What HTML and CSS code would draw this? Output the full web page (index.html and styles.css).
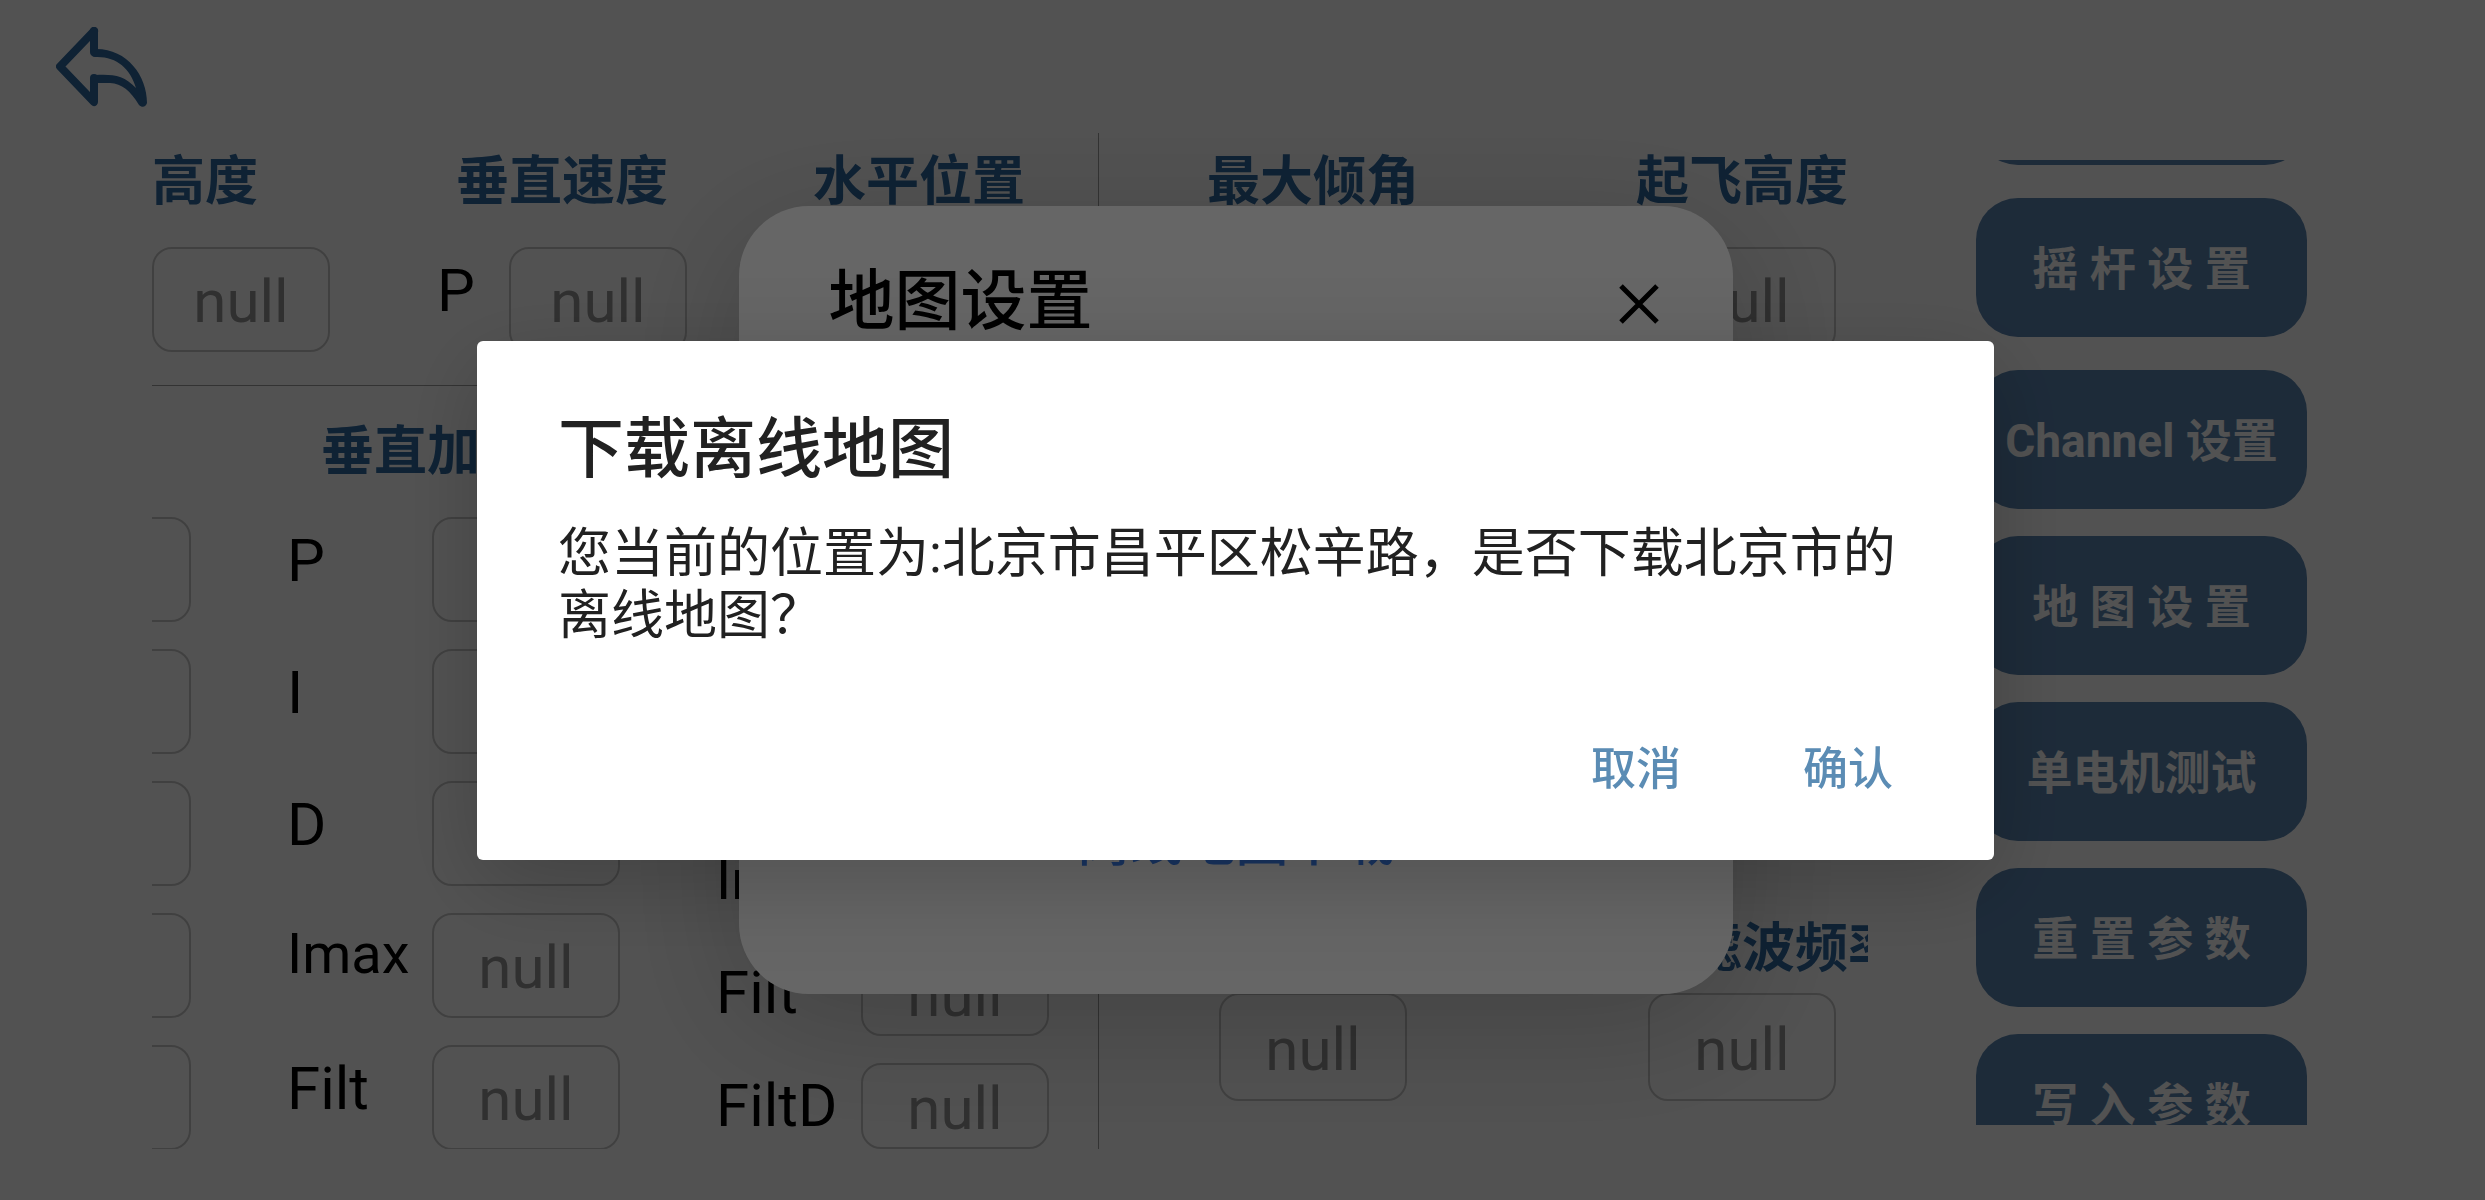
FILE: index.html
```html
<!DOCTYPE html>
<html lang="zh-CN">
<head>
<meta charset="utf-8">
<title>参数设置</title>
<link rel="stylesheet" href="styles.css">
</head>
<body>
<div class="page">
  <header class="topbar">
    <button class="back" type="button" aria-label="返回">
      <svg viewBox="0 0 92 80" width="92" height="80" fill="none" stroke="currentColor" stroke-linejoin="round" stroke-linecap="round">
        <path stroke-width="8" d="M38 4 L4 39.500 L38 75 V51"/>
        <path stroke-width="8" d="M38 4 V25"/>
        <path fill="currentColor" stroke="none" d="M37 22 C70 20 91 48 91 76 C90 80 86 81 83 78 C74 63 66 57 54 56 H37 C34 56 34 48 39 48 C56 47 68 48 80 61 C74 41 60 29 39 30 C34 30 34 23 37 22 Z"/>
      </svg>
    </button>
  </header>
  <main class="content">
    <div class="params">
      <div class="loops">
        <div class="outer">
          <section class="group start">
            <h2>高度</h2>
            <input class="narrow" value="null" aria-label="高度">
          </section>
          <section class="group">
            <h2>垂直速度</h2>
            <div class="field tight"><label for="vs-p">P</label><input class="narrow" id="vs-p" value="null"></div>
          </section>
          <section class="group">
            <h2>水平位置</h2>
            <div class="field tight"><label for="hp-p">P</label><input class="narrow" id="hp-p" value="null"></div>
          </section>
        </div>
        <div class="inner">
          <div class="scrolled">
            <input value="null" aria-label="P">
            <input value="null" aria-label="I">
            <input value="null" aria-label="D">
            <input value="null" aria-label="Imax">
            <input value="null" aria-label="Filt">
          </div>
          <section class="vertical">
            <h2>垂直加速度</h2>
            <div class="field"><label for="va-p">P</label><input id="va-p" value="null"></div>
            <div class="field"><label for="va-i">I</label><input id="va-i" value="null"></div>
            <div class="field"><label for="va-d">D</label><input id="va-d" value="null"></div>
            <div class="field"><label class="small" for="va-imax">Imax</label><input id="va-imax" value="null"></div>
            <div class="field"><label for="va-filt">Filt</label><input id="va-filt" value="null"></div>
          </section>
          <section class="horizontal">
            <h2>水平速度</h2>
            <div class="field"><label for="hv-p">P</label><input id="hv-p" value="null"></div>
            <div class="field"><label for="hv-i">I</label><input id="hv-i" value="null"></div>
            <div class="field"><label for="hv-d">D</label><input id="hv-d" value="null"></div>
            <div class="field"><label class="small" for="hv-imax">Imax</label><input id="hv-imax" value="null"></div>
            <div class="field"><label for="hv-filt">Filt</label><input id="hv-filt" value="null"></div>
            <div class="field"><label for="hv-filtd">FiltD</label><input id="hv-filtd" value="null"></div>
          </section>
        </div>
      </div>
      <div class="limits">
        <div class="pair">
          <section class="group"><h2>最大倾角</h2><input value="null" aria-label="最大倾角"></section>
          <section class="group"><h2>起飞高度</h2><input value="null" aria-label="起飞高度"></section>
        </div>
        <div class="pair filters">
          <section class="group"><h2>加计滤波频率</h2><input value="null" aria-label="加计滤波频率"></section>
          <section class="group"><h2>陀螺滤波频率</h2><input value="null" aria-label="陀螺滤波频率"></section>
        </div>
      </div>
    </div>
    <nav class="menu">
      <button class="spaced" type="button">基 础 设 置</button>
      <button class="spaced" type="button">摇 杆 设 置</button>
      <button type="button">Channel 设置</button>
      <button type="button">地 图 设 置</button>
      <button type="button">单电机测试</button>
      <button type="button">重 置 参 数</button>
      <button type="button">写 入 参 数</button>
    </nav>
  </main>
</div>

<div class="overlay light">
  <section class="card">
    <header>
      <h2>地图设置</h2>
      <button class="close" type="button" aria-label="关闭">
        <svg viewBox="0 0 40 40" width="40" height="40" stroke="currentColor" stroke-width="5"><path d="M2 2 L38 38 M38 2 L2 38"/></svg>
      </button>
    </header>
    <a href="#download">离线地图下载</a>
  </section>
</div>

<div class="overlay dark">
  <section class="dialog" role="dialog" aria-labelledby="dialog-title">
    <h2 id="dialog-title">下载离线地图</h2>
    <p>您当前的位置为:北京市昌平区松辛路，是否下载北京市的离线地图？</p>
    <footer>
      <button type="button">取消</button>
      <button type="button">确认</button>
    </footer>
  </section>
</div>
</body>
</html>
```
FILE: styles.css
```css
* {
  box-sizing: border-box;
}

body {
  margin: 0;
  background: #fff;
  color: #000;
  font-family: Roboto, "Noto Sans CJK SC", sans-serif;
  overflow: hidden;
}

h2,
p {
  margin: 0;
}

button {
  border: 0;
  background: none;
  padding: 0;
  font-family: inherit;
}

svg {
  display: block;
}

.page {
  height: 100vh;
  display: flex;
  flex-direction: column;
}

.topbar {
  flex: none;
  height: 133px;
  padding: 27px 56px;
}

.back {
  color: #2f6aa2;
}

.content {
  flex: 1;
  min-height: 0;
  display: flex;
  gap: 108px;
  padding: 0 178px 51px 152px;
}

.params {
  flex: 1;
  min-width: 0;
  display: flex;
  overflow: hidden;
}

.params h2 {
  color: #2f6aa2;
  font-size: 53px;
  line-height: 64px;
  font-weight: 700;
  white-space: nowrap;
}

.params input {
  width: 188px;
  height: 105px;
  flex: none;
  padding: 4px 0 0;
  border: 2px solid #c8c8c8;
  border-radius: 20px;
  background: none;
  color: #969696;
  font-family: inherit;
  font-size: 60px;
  text-align: center;
}

.params input.narrow {
  width: 178px;
}

.loops {
  width: 947px;
  flex: none;
  border-right: 1px solid #9f9f9f;
}

.outer {
  display: flex;
  gap: 107px;
  padding: 17px 0 33px;
  border-bottom: 1px solid #9f9f9f;
}

.group {
  display: flex;
  flex-direction: column;
  align-items: center;
  gap: 33px;
}

.group.start {
  align-items: flex-start;
}

.field {
  display: grid;
  grid-template-columns: 145px 188px;
  align-items: center;
}

.field.tight {
  grid-template-columns: 72px 178px;
}

.field label {
  padding-bottom: 18px;
  font-size: 60px;
  line-height: 70px;
}

.field label.small {
  padding-bottom: 24px;
  font-size: 56px;
}

.inner {
  display: flex;
  padding-top: 34px;
}

.scrolled {
  width: 39px;
  flex: none;
  display: flex;
  flex-direction: column;
  align-items: flex-end;
  gap: 27px;
  padding-top: 97px;
  overflow: hidden;
}

.vertical {
  display: flex;
  flex-direction: column;
  gap: 27px;
  margin-left: 96px;
}

.vertical h2 {
  margin-bottom: 6px;
  text-align: center;
}

.horizontal {
  display: flex;
  flex-direction: column;
  gap: 27px;
  margin-left: 96px;
}

.horizontal h2 {
  margin-bottom: -13px;
  text-align: center;
}

.horizontal .field label {
  padding-bottom: 0;
}

.horizontal input {
  height: 86px;
}

.limits {
  flex: 1;
  min-width: 0;
  display: flex;
  flex-direction: column;
  justify-content: space-between;
  padding: 17px 0 48px 120px;
}

.pair {
  display: flex;
  gap: 241px;
}

.pair .group {
  width: 188px;
  flex: none;
}

.filters .group {
  gap: 12px;
}

.filters input {
  height: 108px;
}

.menu {
  width: 331px;
  flex: none;
  display: flex;
  flex-direction: column;
  gap: 27px;
  margin: 27px 0 24px;
  overflow: hidden;
}

.menu button {
  height: 139px;
  flex: none;
  padding-bottom: 5px;
  border-radius: 42px;
  background: #5b86b2;
  color: #fff;
  font-size: 46px;
  font-weight: 700;
}

.menu button:first-child {
  margin-top: -134px;
}

.menu .spaced {
  margin-bottom: 6px;
}

.overlay {
  position: fixed;
  inset: 0;
  display: flex;
  align-items: center;
  justify-content: center;
  padding-right: 14px;
}

.light {
  background: rgba(0, 0, 0, 0.2);
}

.dark {
  background: rgba(0, 0, 0, 0.6);
}

.card {
  width: 994px;
  min-height: 788px;
  display: flex;
  flex-direction: column;
  justify-content: space-between;
  align-items: center;
  padding: 57px 74px 121px;
  border-radius: 70px;
  background: #fff;
  box-shadow: 0 30px 130px rgba(0, 0, 0, 0.2);
}

.card header {
  width: 100%;
  display: flex;
  align-items: center;
  justify-content: space-between;
  padding-left: 16px;
}

.card h2 {
  font-size: 66px;
  line-height: 78px;
  font-weight: 500;
}

.close {
  padding-top: 4px;
}

.card a {
  color: #4084f4;
  font-size: 53px;
  line-height: 60px;
  font-weight: 500;
  text-decoration: none;
}

.dialog {
  width: 1517px;
  padding: 70px 81px 60px;
  border-radius: 6px;
  background: #fff;
  color: #212121;
  box-shadow: 0 24px 90px rgba(0, 0, 0, 0.2);
}

.dialog h2 {
  font-size: 66px;
  line-height: 78px;
  font-weight: 500;
}

.dialog p {
  margin-top: 34px;
  font-size: 53px;
  line-height: 62px;
}

.dialog footer {
  display: flex;
  justify-content: flex-end;
  gap: 122px;
  margin-top: 93px;
  padding-right: 20px;
}

.dialog button {
  color: #5b8cb4;
  font-size: 45px;
  line-height: 60px;
  font-weight: 500;
}
```
